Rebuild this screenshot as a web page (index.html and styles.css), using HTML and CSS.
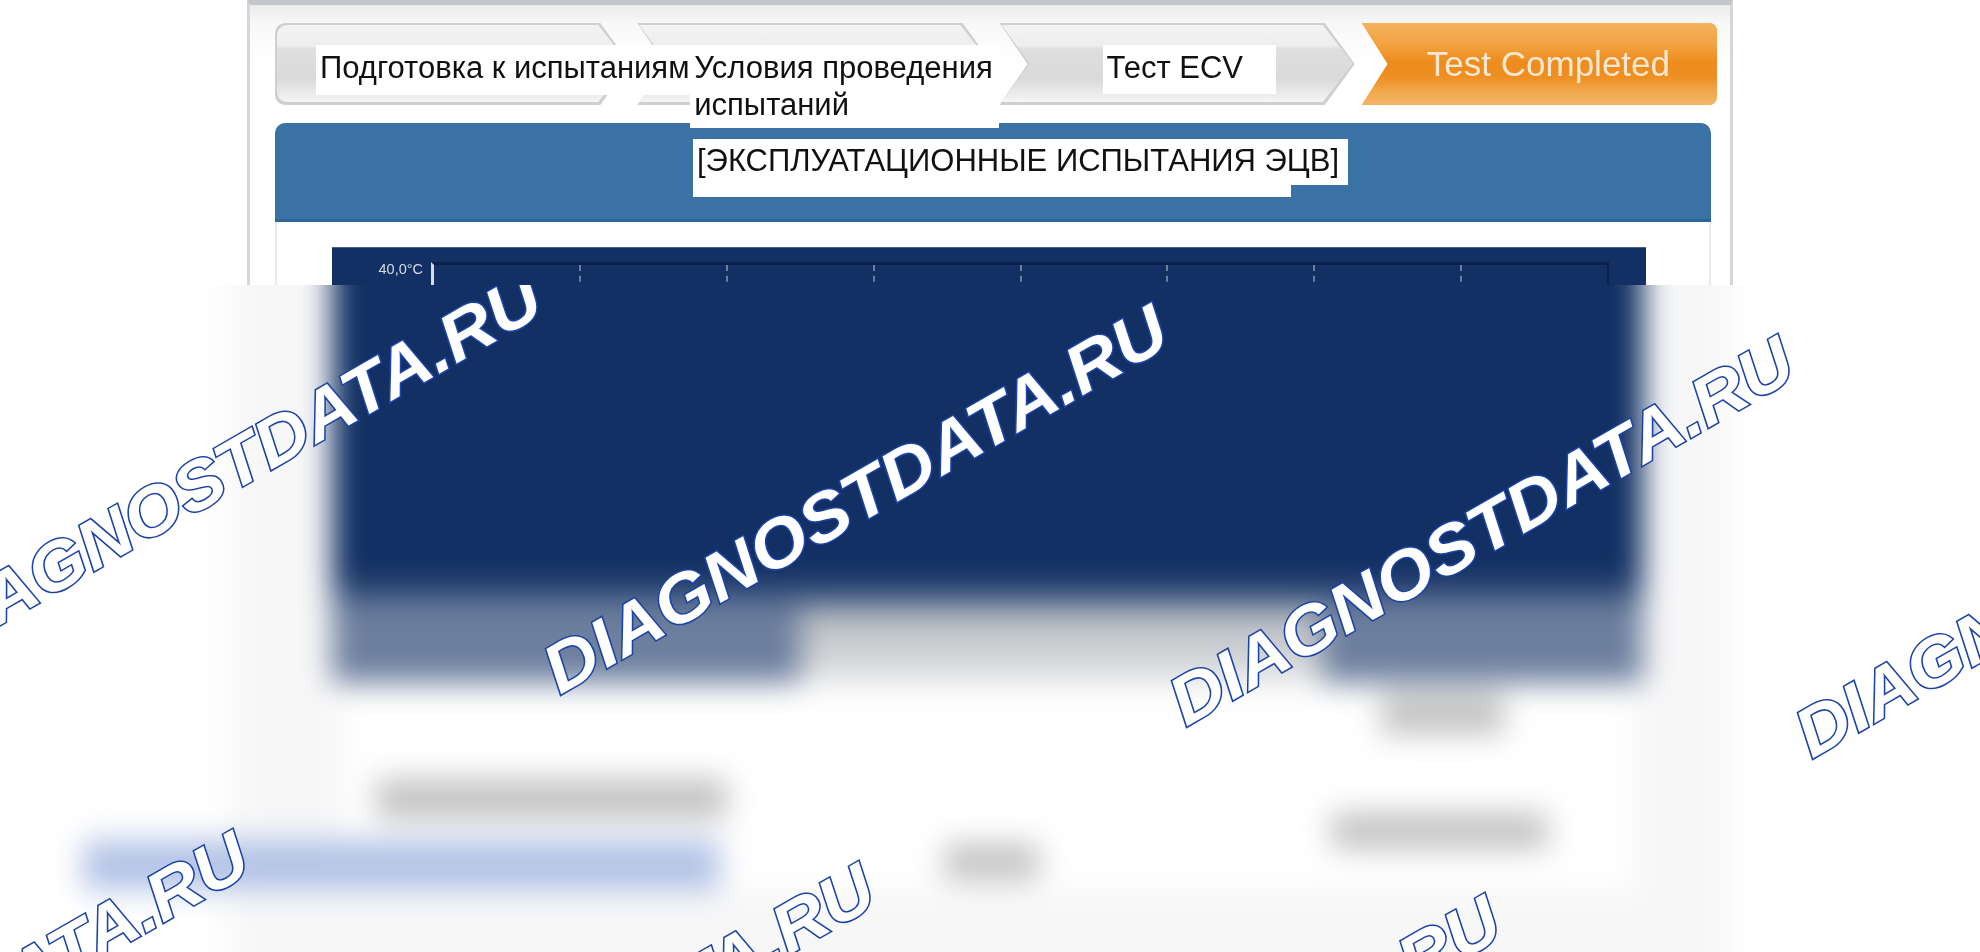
FILE: index.html
```html
<!DOCTYPE html>
<html lang="ru">

<head>
    <meta charset="UTF-8">
    <title>Test ECV</title>
    <link rel="stylesheet" href="styles.css">
</head>

<body>
    <!-- Sharp part of the tester window -->
    <section class="top">
        <div class="window">
            <div class="steps">
                <div class="step step-first">
                    <div class="arrow"></div>
                    <span class="label label-prep">Подготовка к испытаниям</span>
                </div>
                <div class="step">
                    <div class="arrow"></div>
                    <span class="label label-cond">Условия проведения испытаний</span>
                </div>
                <div class="step">
                    <div class="arrow"></div>
                    <span class="label label-test">Тест ECV</span>
                </div>
                <div class="step step-done">
                    <div class="arrow"></div>
                    <span class="step-text">Test Completed</span>
                </div>
            </div>

            <div class="panel-head">
                <h1 class="title-label">[ЭКСПЛУАТАЦИОННЫЕ ИСПЫТАНИЯ ЭЦВ]</h1>
            </div>

            <div class="panel-body">
                <div class="chart">
                    <div class="axis">40,0°C</div>
                    <div class="plot">
                        <div class="plot-cell"></div>
                        <div class="plot-cell"></div>
                        <div class="plot-cell"></div>
                        <div class="plot-cell"></div>
                        <div class="plot-cell"></div>
                        <div class="plot-cell"></div>
                        <div class="plot-cell"></div>
                        <div class="plot-cell"></div>
                    </div>
                </div>
            </div>
        </div>
    </section>

    <!-- Censored part, everything in it is blurred -->
    <section class="lower">
        <div class="blurred">
            <div class="sheet">
                <div class="graph"></div>
                <div class="legend">
                    <div class="legend-side legend-left"></div>
                    <div class="legend-mid"></div>
                    <div class="legend-side legend-right"></div>
                </div>
                <div class="readings">
                    <div class="blob blob-value"></div>
                    <div class="reading-row">
                        <div class="blob blob-name"></div>
                        <div class="blob blob-result"></div>
                    </div>
                    <div class="reading-row link-row">
                        <div class="blob blob-link"></div>
                        <div class="blob blob-unit"></div>
                    </div>
                </div>
            </div>
        </div>

        <!-- Watermarks -->
        <svg class="marks" viewBox="0 285 1980 667" width="1980" height="667">
            <text class="mark" transform="translate(-66 663) rotate(-29.8) scale(1.08 1)">DIAGNOSTDATA.RU</text>
            <text class="mark" transform="translate(560 695) rotate(-29.8) scale(1.08 1)">DIAGNOSTDATA.RU</text>
            <text class="mark" transform="translate(1186 727) rotate(-29.8) scale(1.08 1)">DIAGNOSTDATA.RU</text>
            <text class="mark" transform="translate(1812 759) rotate(-29.8) scale(1.08 1)">DIAGNOSTDATA.RU</text>
            <text class="mark" transform="translate(-359 1222) rotate(-29.8) scale(1.08 1)">DIAGNOSTDATA.RU</text>
            <text class="mark" transform="translate(267 1254) rotate(-29.8) scale(1.08 1)">DIAGNOSTDATA.RU</text>
            <text class="mark" transform="translate(893 1286) rotate(-29.8) scale(1.08 1)">DIAGNOSTDATA.RU</text>
        </svg>
    </section>
</body>

</html>
```

FILE: styles.css
```css
html,
body {
    margin: 0;
    height: 952px;
    overflow: hidden;
    background-color: #fff;
    font-family: "Liberation Sans", Arial, sans-serif;
}

/* Top part */
.top {
    height: 285px;
    overflow: hidden;
}

.window {
    box-sizing: border-box;
    width: 1486px;
    height: 285px;
    margin-left: 247px;
    padding: 18px 13px 0 25px;
    border-top: 5px solid #c3c7cb;
    border-left: 3px solid #d4d7da;
    border-right: 3px solid #d4d7da;
    background: linear-gradient(#e9eaea, #f8f8f8 18px, #fff 60px);
}

/* Step arrows */
.steps {
    display: flex;
    gap: 7px;
    height: 82px;
}

.step {
    position: relative;
    flex: 1;
}

.arrow {
    position: absolute;
    inset: 0;
    filter: blur(0.7px);
}

.arrow::before,
.arrow::after {
    content: "";
    position: absolute;
    clip-path: polygon(0 0, calc(100% - 30px) 0, 100% 50%, calc(100% - 30px) 100%, 0 100%, 28px 50%);
}

.arrow::before {
    inset: 0;
    background-color: #cdcfd0;
}

.arrow::after {
    inset: 2px 2px 3px 2px;
    background: linear-gradient(#f3f3f3, #eeeeee 26%, #dedede 32%, #dadada 70%, #e8e8e8 86%, #f5f5f5);
}

.step-first .arrow::before,
.step-first .arrow::after {
    border-radius: 10px 0 0 10px;
    clip-path: polygon(0 0, calc(100% - 30px) 0, 100% 50%, calc(100% - 30px) 100%, 0 100%);
}

.step-done {
    display: flex;
    align-items: center;
    justify-content: flex-end;
}

.step-done .arrow::before,
.step-done .arrow::after {
    inset: 0;
    border-radius: 0 8px 8px 0;
    clip-path: polygon(0 0, 100% 0, 100% 100%, 0 100%, 26px 50%);
    background: linear-gradient(#f4b25c, #f3a445 24%, #ee8c1c 48%, #ee8f22 66%, #f2a850 84%, #f5b566);
}

.step-text {
    position: relative;
    z-index: 1;
    margin-right: 47px;
    color: #f6e8d2;
    font-size: 35px;
    filter: blur(0.7px);
}

/* White boxes with the translated text, laid over the picture */
.label {
    position: absolute;
    z-index: 2;
    box-sizing: border-box;
    padding: 4px 0 0 4px;
    background-color: #fff;
    color: #111;
    font-size: 31px;
    line-height: 37px;
    filter: blur(0.5px);
}

.label-prep {
    left: 41px;
    top: 22px;
    width: 375px;
    height: 50px;
    white-space: nowrap;
}

.label-cond {
    left: 53px;
    top: 22px;
    width: 309px;
    height: 83px;
}

.label-test {
    left: 103px;
    top: 22px;
    width: 173px;
    height: 49px;
}

/* Blue header */
.panel-head {
    position: relative;
    height: 99px;
    margin: 18px 6px 0 0;
    border-radius: 10px 10px 0 0;
    box-sizing: border-box;
    border-bottom: 3px solid #2f6496;
    background-color: #3a72a5;
}

.title-label {
    position: absolute;
    left: 418px;
    top: 16px;
    box-sizing: border-box;
    width: 655px;
    height: 46px;
    margin: 0;
    padding: 3px 0 0 4px;
    background-color: #fff;
    color: #111;
    font-size: 31px;
    font-weight: normal;
    line-height: 37px;
    white-space: nowrap;
    filter: blur(0.5px);
}

.title-label::after {
    content: "";
    position: absolute;
    left: 0;
    top: 100%;
    width: 598px;
    height: 12px;
    background-color: #fff;
}

.panel-body {
    height: 100px;
    margin-right: 6px;
    padding: 25px 63px 0 55px;
    box-sizing: border-box;
    border-left: 2px solid #e8eaeb;
    border-right: 2px solid #e8eaeb;
    background-color: #fff;
}

/* Chart */
.chart {
    display: flex;
    height: 100px;
    background-color: #123063;
    border-top: 1px solid #4a5f85;
}

.axis {
    box-sizing: border-box;
    width: 99px;
    padding: 13px 8px 0 0;
    color: #d5dbe6;
    font-size: 14.5px;
    text-align: right;
    filter: blur(0.5px);
}

.plot {
    flex: 1;
    display: grid;
    grid-template-columns: repeat(8, 1fr);
    height: 60px;
    margin: 14px 37px 0 0;
    border-top: 3px solid #0b2149;
    border-left: 3px solid #d7dce4;
}

.plot-cell {
    border-right: 2px dashed #6a7f9f;
}

.plot-cell:last-child {
    border-right: 2px solid #0b2149;
}

/* Lower part, hidden behind a blur */
.lower {
    position: relative;
    height: 667px;
    overflow: hidden;
}

.blurred {
    margin-top: -40px;
    filter: blur(15px);
}

.sheet {
    box-sizing: border-box;
    width: 1502px;
    height: 760px;
    margin-left: 228px;
    padding-left: 104px;
    background-color: #f7f7f8;
}

.graph {
    width: 1311px;
    height: 363px;
    background: linear-gradient(#123063 92%, #6d7f9e);
}

.legend {
    display: flex;
    width: 1311px;
    height: 75px;
}

.legend-side {
    background-color: #6d7f9e;
}

.legend-left {
    width: 468px;
}

.legend-right {
    width: 321px;
}

.legend-mid {
    flex: 1;
    background: linear-gradient(#b4b8be, #cfd1d4 60%, #e4e5e6);
}

.readings {
    box-sizing: border-box;
    width: 1290px;
    height: 207px;
    margin-left: 12px;
    padding-top: 11px;
    background-color: #fff;
}

.blob {
    flex: none;
    background-color: #c2c2c2;
}

.blob-value {
    width: 123px;
    height: 40px;
    margin-left: 1037px;
}

.reading-row {
    display: flex;
}

.blob-name {
    width: 351px;
    height: 40px;
    margin: 45px 0 0 32px;
}

.blob-result {
    width: 217px;
    height: 36px;
    margin: 79px 0 0 604px;
}

.link-row {
    margin-top: -9px;
}

.blob-link {
    width: 637px;
    height: 50px;
    margin-left: -261px;
    background-color: #b3c3e6;
}

.blob-unit {
    width: 95px;
    height: 36px;
    margin: 4px 0 0 224px;
}

/* Watermark overlay */
.marks {
    position: absolute;
    left: 0;
    top: 0;
}

.mark {
    fill: #fff;
    stroke: #1c44a6;
    stroke-width: 3px;
    paint-order: stroke;
    font-family: "Liberation Sans", Arial, sans-serif;
    font-size: 68px;
    font-style: italic;
    font-weight: bold;
}
```
